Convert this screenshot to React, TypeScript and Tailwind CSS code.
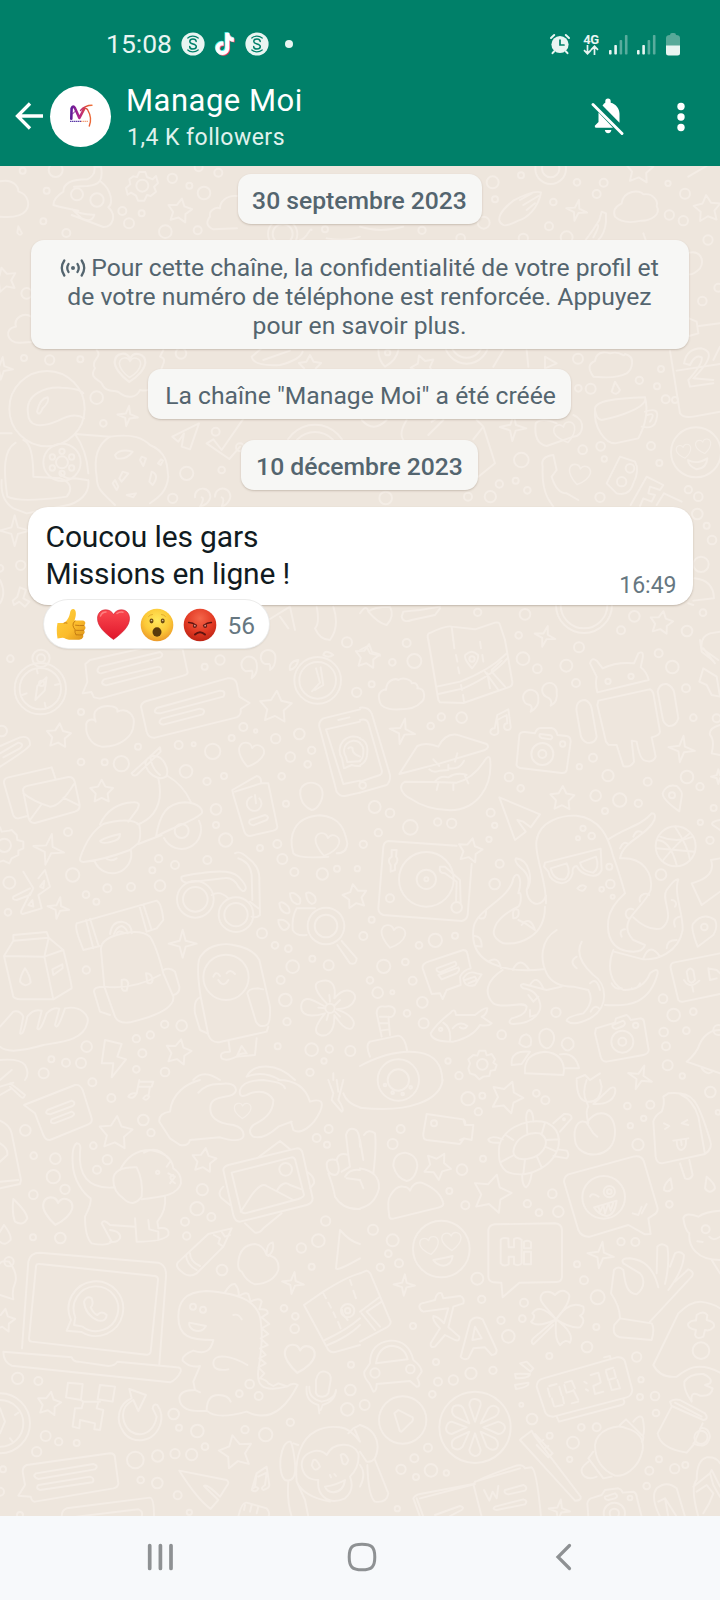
import React from "react";

type Dot = [number, number, number];
type Mark = [number, number, number, number];
interface Tile {
  x: number;
  y: number;
  dots: Dot[];
  stars: Mark[];
  sparkles: Mark[];
  hearts: Mark[];
  lines: string[];
}

const tiles: Tile[] = [
  {
    x: 0,
    y: 160,
    dots: [
      [167, 30, 21], [68, 32, 9], [517, 55, 14], [568, 77, 9], [612, 99, 19], [140, 92, 9], [130, 184, 9], [199, 219, 12],
      [367, 153, 12], [425, 160, 9], [387, 190, 15], [496, 215, 19], [593, 211, 12], [596, 22, 12], [655, 38, 12],
      [80, 400, 16], [72, 594, 9], [149, 600, 14], [241, 598, 9], [290, 713, 19], [310, 790, 10], [543, 580, 16],
      [647, 815, 12], [665, 930, 10], [560, 940, 20], [518, 1015, 14], [62, 1216, 14], [427, 77, 18], [848, 222, 44],
      [848, 222, 30], [975, 208, 9], [141, 746, 113], [186, 907, 56], [186, 907, 18], [186, 874, 8], [215, 891, 8],
      [215, 924, 8], [186, 940, 8], [157, 924, 8], [157, 891, 8], [231, 103, 18], [291, 120, 20], [945, 890, 96],
      [945, 890, 74], [720, 862, 12], [0, 1225, 10],
    ],
    stars: [[539, 153, 38, 10], [14, 360, 38, -15], [930, 620, 35, 0]],
    sparkles: [[383, 768, 31, 8], [5, 625, 34, 5], [44, 1112, 46, 0]],
    hearts: [[390, 622, 46, 0], [390, 622, 32, 0]],
    lines: [
      "M0 64C40 55 55 80 55 94C90 105 88 140 78 152C60 175 20 172 0 170",
      "M190 95Q160 115 160 135Q180 142 235 152M190 95C190 65 230 58 262 58Q288 45 283 20L303 20C310 60 300 75 262 78L222 80M303 65C335 90 340 130 325 142C350 165 340 200 310 201L215 165M217 148Q240 165 283 164Q275 190 245 175Z",
      "M418 36L436 36L441 51L458 58L468 48L474 70L462 80L468 95L452 108L441 105L433 122L414 122L408 107L393 98L383 104L378 84L391 73L388 58L400 49L411 51Z",
      "M711 205L640 208Q610 195 630 170C625 150 650 140 660 145C660 125 680 105 711 108",
      "M55 199L66 220Q60 230 52 218Z",
      "M94 470C70 455 40 475 48 500C10 505 20 550 60 548L94 546",
      "M290 570C310 590 270 600 285 625C265 655 300 660 305 670C320 705 350 685 360 700C380 715 410 715 420 690C460 700 455 665 480 655C475 620 510 600 480 590L490 570",
      "M84 760C75 700 140 680 185 683Q240 685 250 700M84 760C85 800 120 805 175 782Q225 755 252 775M111 755Q120 715 143 712Q150 725 128 745Q118 770 111 755Z",
      "M47 848C10 870 10 930 22 1010C60 1030 160 1015 200 1010C225 980 200 960 180 955L100 950Q100 850 70 840M180 935Q190 960 225 955L260 960M225 822Q260 870 265 940M265 960C270 1000 240 1030 190 1038L80 1060M225 822L330 830M0 820L35 820M5 960Q0 1020 40 1045L80 1060",
      "M330 830C400 820 430 835 450 855C510 880 500 930 505 950C500 1000 470 1015 450 1030M330 830C280 860 285 920 290 950C290 990 310 1000 345 1035",
      "M345 885Q360 865 398 875Q380 900 350 895ZM425 890L438 895L430 918L420 900ZM483 898L489 902L482 915L474 910ZM368 935L385 940L365 965L358 955ZM455 935Q480 945 458 975L448 965ZM345 960L355 980L350 990L338 970ZM380 1005L408 1000L400 1012Z",
      "M517 830L597 790L570 868L545 860L552 820L535 845Z",
      "M620 850L640 838L665 870L790 690M620 850L688 897L720 860M755 590L790 560M755 590Q760 620 840 615Q900 600 908 575M790 600L870 572",
      "M585 1012A23 23 0 1 1 628 1020Q620 1035 600 1040Q615 1015 605 1012M645 1010A23 23 0 1 1 688 1020Q680 1035 665 1040Q675 1015 665 1012",
      "M60 1282L78 1290L70 1315L88 1325L75 1340L58 1325L42 1335L38 1322L52 1310Z",
      "M0 1260Q20 1300 0 1330M805 1380L870 1340L885 1410M840 1370L865 1405M950 1340Q960 1390 945 1405Q960 1440 990 1440Q1020 1400 1000 1340",
      "M935 210C930 200 920 240 900 240M980 235Q1040 245 1080 230",
    ],
  },
  {
    x: 360,
    y: 160,
    dots: [
      [398, 67, 18], [483, 46, 9], [405, 118, 9], [651, 67, 10], [731, 68, 12], [710, 102, 12], [580, 126, 10], [567, 199, 12],
      [371, 188, 18], [186, 211, 11], [490, 235, 14], [620, 232, 18], [924, 70, 8], [975, 101, 15], [928, 165, 14],
      [970, 182, 14], [1044, 240, 14], [1075, 383, 12], [1027, 423, 13], [302, 235, 13], [654, 596, 15], [903, 627, 9],
      [838, 661, 11], [891, 679, 9], [692, 686, 15], [917, 718, 12], [722, 859, 13], [668, 869, 13], [873, 858, 12],
      [733, 897, 8], [898, 909, 9], [484, 900, 22], [467, 962, 9], [418, 972, 11], [502, 991, 10], [391, 1010, 17],
      [324, 1010, 12], [720, 1012, 14], [985, 989, 11], [1015, 1010, 13], [1012, 1062, 16], [1040, 1097, 9],
      [1056, 1140, 13], [1023, 1213, 23], [1029, 1358, 10], [823, 1369, 16], [353, 1357, 11], [495, 1363, 16],
      [476, 1426, 10], [783, 1411, 12], [981, 1413, 16], [1008, 877, 75], [810, 925, 13], [785, 965, 14], [77, 1014, 19],
      [572, 26, 46], [572, 26, 26], [672, 1335, 84], [672, 1335, 70], [320, 545, 66], [320, 545, 48], [83, 578, 8],
      [655, 685, 10], [945, 720, 9],
    ],
    stars: [[838, 30, 43, 5], [1042, 147, 42, -5], [190, 622, 38, -20], [904, 1389, 36, 10]],
    sparkles: [[650, 151, 32, 12], [459, 803, 40, 3], [555, 1429, 32, 15]],
    hearts: [[658, 944, 32, 10], [972, 874, 22, -12], [1031, 859, 23, -12], [616, 818, 32, -18]],
    lines: [
      "M430 195C400 180 430 145 460 122Q520 90 543 97C535 145 500 175 475 182Q440 200 430 195ZM480 120L515 100M490 135L535 108M500 150L525 130",
      "M985 50L1040 18",
      "M765 170Q755 145 785 130C790 90 840 88 850 103C880 98 895 125 890 138C905 165 870 182 845 182C810 190 780 185 765 170Z",
      "M677 240Q700 210 718 180L725 155L738 160L738 185Q735 220 715 240M700 232Q718 200 714 195M850 220L857 240",
      "M987 278C1020 270 1035 300 1020 325Q1000 345 987 343M987 475L1010 485L1015 520L987 528M1017 498L1080 490",
      "M700 650Q675 615 705 603C710 565 750 580 750 580C785 570 790 595 795 582C830 590 815 630 800 640C760 660 720 650 700 650Z",
      "M765 665L780 690Q770 710 755 695ZM555 590L590 610L555 625Z",
      "M930 572L960 760Q970 775 1000 770L1080 755M950 632L1080 612M972 610Q980 565 1025 565C1065 575 1045 610 1000 655L1060 660M972 610L990 615Q1005 582 1025 592Q1030 610 985 660L990 680L1060 670M1060 600L1080 560",
      "M705 750C700 720 780 715 855 712C865 740 780 770 725 780Q710 780 705 750C700 800 735 850 765 850L835 835Q870 770 855 712M855 755Q900 740 890 775Q885 810 845 800M862 765Q890 755 870 785",
      "M527 790Q520 850 560 858L640 830C670 830 680 780 640 765M527 790Q545 770 590 790",
      "M548 920Q540 890 580 885L590 930L575 950Q590 1000 620 1000L655 1020M548 920Q545 990 570 1025L580 1040",
      "M780 890L740 970L770 1000Q810 1010 820 970Q840 930 825 905ZM860 950L910 975L900 990L870 980L865 1000L885 1005L875 1025L850 1015L840 1038M860 950L812 1035M912 1000L965 1025M912 1000L890 1035",
      "M205 825L250 780M215 785L240 770M350 780L370 800L405 910L355 950M370 800L340 838M130 840Q115 820 140 780M55 570Q55 600 75 620Q110 600 115 570M400 620L430 570M500 570L505 620M5 780Q40 820 80 780",
      "M0 1360Q20 1330 25 1355Q40 1340 90 1340M25 1355Q55 1390 80 1395Q105 1370 90 1340M125 1370L130 1355L180 1350L240 1340M125 1370Q130 1390 155 1380L225 1365L240 1345",
      "M207 1420Q260 1395 275 1400L345 1408L405 1388Q418 1385 420 1395L435 1440M207 1420Q200 1425 205 1440M275 1400L280 1440",
      "M0 1470L20 1460L30 1480L60 1487",
      "M1003 1255Q1060 1260 1062 1315L1000 1322M985 1330L1000 1335M1080 1415L1050 1420Q1020 1430 1025 1465L1075 1500M1030 1465L1065 1510M0 200Q60 220 130 200",
      "M984 900Q1010 915 1042 895Q1040 925 1010 928Q985 918 984 900Z",
    ],
  },
  {
    x: 0,
    y: 640,
    dots: [
      [31, 56, 10], [660, 60, 14], [614, 80, 9], [243, 216, 9], [730, 261, 12], [767, 273, 5], [695, 294, 9], [827, 296, 14],
      [898, 282, 16], [935, 331, 11], [871, 351, 14], [923, 373, 10], [414, 320, 9], [536, 315, 12], [581, 313, 6],
      [638, 334, 23], [364, 371, 23], [243, 366, 10], [314, 367, 9], [558, 394, 19], [621, 424, 11], [672, 408, 9],
      [845, 409, 10], [858, 491, 9], [648, 508, 16], [648, 555, 9], [204, 576, 12], [677, 600, 20], [780, 624, 9],
      [832, 612, 12], [847, 657, 15], [883, 696, 12], [967, 702, 17], [1011, 686, 9], [1072, 686, 8], [476, 656, 11],
      [457, 691, 9], [525, 675, 12], [622, 660, 12], [218, 705, 20], [322, 745, 12], [393, 741, 12], [480, 737, 16],
      [258, 764, 10], [289, 785, 9], [28, 728, 18], [24, 817, 10], [786, 880, 15], [825, 916, 10], [865, 926, 10],
      [937, 956, 9], [986, 976, 15], [878, 980, 19], [842, 1020, 12], [259, 990, 11], [856, 1080, 19], [861, 1145, 11],
      [494, 1153, 11], [545, 1157, 16], [451, 1185, 11], [409, 1196, 11], [260, 1220, 16], [427, 1240, 12],
      [833, 1219, 9], [935, 1229, 19], [988, 1227, 11], [1051, 1233, 15], [972, 1263, 8], [154, 1258, 9],
      [198, 1268, 12], [243, 1269, 15], [131, 1300, 15], [409, 1288, 10], [495, 1296, 13], [930, 1297, 11],
      [1070, 157, 14], [1041, 7, 15], [5, 273, 16], [121, 146, 77], [121, 146, 62], [123, 55, 26], [123, 55, 12],
      [953, 121, 70], [953, 121, 55], [586, 778, 55], [586, 778, 37], [708, 824, 52], [708, 824, 35],
      [978, 858, 55], [978, 858, 34], [678, 1012, 68], [13, 616, 20], [990, 1105, 14], [125, 130, 8], [545, 573, 21],
    ],
    stars: [[176, 288, 38, 5], [827, 202, 50, 4], [305, 455, 36, 0], [1065, 770, 38, -10], [535, 1237, 40, 12]],
    sparkles: [[146, 628, 47, 12], [175, 804, 33, 10], [548, 911, 42, 0]],
    hearts: [[752, 345, 38, 12], [980, 614, 36, 10]],
    lines: [
      "M140 112L134 152L106 180L112 138ZM110 88L113 100M134 188L137 202M165 135L178 132M66 165L80 160",
      "M270 60L440 22L548 28L563 98Q562 104 550 107L300 176L282 172L274 156L248 160L262 126L256 72ZM298 80L480 36Q493 44 482 52L302 100Q285 96 298 80ZM312 118L475 80Q490 84 480 94L318 136Q298 132 312 118Z",
      "M440 183L682 115Q705 112 710 130L718 170L749 189L722 207Q725 225 710 232L465 293Q445 294 440 275L423 200Q424 188 440 183ZM470 204L660 152Q680 152 670 170L480 220Q455 220 470 204ZM485 236L600 206Q620 208 608 223L490 254Q470 250 485 236Z",
      "M259 260C255 235 285 235 287 245C270 205 310 198 322 198C345 198 355 205 352 215C385 200 405 230 401 252C400 290 360 322 305 320C270 315 257 280 259 260Z",
      "M738 94A23 23 0 1 1 770 70Q775 100 755 115Q760 95 755 92ZM795 72A22 22 0 1 1 826 48Q828 80 810 90Q812 75 808 72Z",
      "M948 85L960 128L936 154M962 82L970 135L945 150M970 45Q975 25 1000 45Q985 55 970 45M870 90Q865 65 895 60Q890 85 870 90",
      "M0 318L60 292Q90 285 90 315Q80 330 0 380M0 340L55 308Q75 312 60 325L10 352",
      "M166 415L155 382L25 412Q10 415 12 430L38 520Q42 537 55 535L82 528M85 437L205 411Q220 410 224 425L239 495Q240 510 225 515L105 549Q90 550 86 535L69 450Q70 440 85 437ZM70 460Q100 485 150 500Q180 500 222 432M90 540L123 495M190 473L237 496",
      "M0 562L5 575L28 572L35 570L50 585L52 600L70 605L70 625L55 632L55 645L35 655L28 670L10 662L0 665",
      "M395 400L455 345L480 322L482 335L410 405Q400 410 395 400ZM460 348C490 345 510 390 498 410C475 425 440 400 436 370Q440 350 460 348ZM452 355Q455 385 480 405M475 415Q490 480 460 520Q440 545 412 553M503 408Q550 435 572 485M468 590C480 520 500 490 555 487C600 490 610 510 605 520C580 545 520 560 468 590ZM597 542A55 55 0 1 1 492 594M300 553Q330 490 400 487Q425 485 412 508L385 545",
      "M240 655Q265 580 310 552C350 540 400 535 418 555Q425 590 415 610L390 630Q310 660 250 666Q238 665 240 655ZM415 612L485 585M285 666A57 57 0 0 0 393 632M315 653Q330 668 350 655M300 603Q320 590 360 582Q360 597 345 602Q305 615 300 603Z",
      "M697 450L770 408Q785 410 783 430L805 430L832 560Q832 568 820 572L750 588Q738 588 733 575L700 465ZM705 455L783 430M755 470A22 22 0 1 0 778 475M765 465L768 490M750 540L795 525Q810 530 800 540L760 556Q742 552 750 540Z",
      "M903 475C890 430 930 425 945 430C975 440 970 470 960 490Q948 510 935 510Q910 500 903 475ZM880 640C865 590 880 530 960 526C1020 530 1035 570 1042 610Q1040 640 1010 640M880 640Q895 657 985 650",
      "M1080 208L970 235Q955 245 958 260L1010 455Q1020 470 1035 468L1080 458M1080 245L978 268L1030 432L1080 422M1015 240L1048 232M1080 294A42 42 0 0 0 1026 355L1032 385L1055 375Q1065 379 1080 378M1080 308A30 30 0 0 0 1038 350L1042 366L1080 364M1045 325Q1050 318 1058 325Q1055 340 1080 350",
      "M705 640Q720 630 745 655Q780 680 778 720L780 825Q770 835 755 830M715 655Q750 665 755 705L757 780M735 750Q730 760 715 740Q700 710 670 715L560 728Q540 725 545 710Q560 705 600 700C660 690 700 695 715 710Q745 740 735 750ZM635 765Q660 750 685 775M775 805L750 785",
      "M70 695L100 745L90 765L50 780Q35 780 40 770L90 745M115 715L135 690L150 740L115 765L125 805L68 822Q60 820 65 810L90 760M120 740L133 722L130 745ZM85 795L97 780L100 800Z",
      "M230 850Q225 860 235 890L250 930L300 918M230 850L470 782Q485 790 490 840L470 865L440 875M258 840L280 925M270 836L295 915M418 797L440 875M430 793L455 870M330 882Q335 845 365 845Q395 850 395 880M342 882Q350 860 365 858Q380 865 383 880M350 880Q355 870 370 878",
      "M303 930Q300 900 350 885Q420 865 450 890Q470 920 490 1000L520 1070Q525 1115 390 1147Q355 1152 345 1130L313 1040ZM313 1040Q400 1050 480 1005M282 1055Q280 1040 313 1040M282 1055L300 1115L330 1125M490 990Q510 980 525 995L538 1040Q540 1060 520 1065M365 1020Q380 1015 385 1030L380 1052Q365 1055 365 1040ZM438 1000Q455 1000 458 1020Q455 1035 442 1028Z",
      "M40 885L140 876L146 893L40 902ZM40 902L12 948L40 1070Q45 1077 60 1078L160 1078L215 1045Q215 1030 190 930L146 893L133 950L160 1078M12 948L133 950L190 930M157 988L187 973L188 985L160 1005ZM75 985Q60 1010 60 1025Q75 1045 92 1028Q90 1005 75 985Z",
      "M838 790Q845 780 865 800Q875 820 860 820Q840 815 838 790ZM870 760Q885 755 900 775Q905 795 890 792Q870 785 870 760ZM918 760Q930 752 945 770Q952 790 935 792Q920 785 918 760ZM835 840Q855 835 868 855Q865 870 850 870Q835 860 835 840ZM945 805L890 805Q875 830 878 870Q890 890 920 885M1025 903L1070 955Q1070 975 1050 970L1012 915",
      "M602 1070Q585 960 605 945C630 910 680 910 700 915Q760 925 778 960L810 1100Q812 1150 800 1155Q780 1165 768 1145L742 1060Q745 1045 775 1045L790 1048M602 1070L625 1185Q635 1210 660 1206L800 1175L805 1160M600 1072Q580 1080 585 1120L600 1170L622 1180M640 1010Q648 990 660 1008M680 1000Q690 985 705 1002M655 1020Q670 1045 685 1020M686 1205L690 1235Q655 1235 665 1255Q680 1265 710 1250L725 1218L740 1240Q715 1240 712 1250L765 1245L770 1195",
      "M980 1090C950 1060 935 1030 960 1024C990 1015 1010 1030 1003 1075C1040 1030 1075 1060 1063 1080Q1055 1105 1010 1108C1060 1125 1070 1150 1055 1165Q1035 1175 1003 1125C1005 1185 975 1190 960 1185Q930 1175 975 1120C905 1140 900 1110 905 1090C915 1065 940 1080 972 1098M990 1085L988 1065M1005 1095L1020 1080M1005 1115L1020 1130M985 1122L980 1140M975 1105L955 1103",
      "M0 1160L40 1115Q60 1110 70 1130L60 1180Q70 1190 82 1130Q100 1105 125 1112L112 1165Q120 1180 140 1120Q160 1100 178 1106L165 1155Q172 1175 195 1105C240 1095 270 1125 262 1150C250 1200 190 1205 130 1215Q80 1230 40 1232Q10 1230 0 1220",
      "M315 1200L365 1212L352 1250L378 1258L335 1312L340 1270L305 1270ZM0 1260Q60 1255 75 1275Q90 1300 75 1320M0 1320L35 1290M580 1320Q610 1285 660 1320M740 1310C760 1270 830 1265 885 1320M740 1310Q790 1290 840 1320M1000 1320L1000 1300",
    ],
  },
  {
    x: 360,
    y: 640,
    dots: [
      [140, 9, 12], [163, 63, 21], [97, 67, 10], [35, 133, 9], [489, 56, 19], [532, 86, 13], [619, 77, 18], [657, 22, 15],
      [648, 129, 12], [896, 40, 12], [937, 81, 19], [978, 145, 12], [244, 231, 11], [305, 233, 16], [212, 258, 10],
      [699, 353, 12], [658, 380, 8], [447, 411, 13], [482, 445, 10], [744, 407, 17], [863, 425, 12], [981, 411, 19],
      [1020, 440, 11], [1000, 233, 10], [1070, 235, 12], [707, 467, 16], [779, 480, 20], [835, 490, 11], [735, 513, 9],
      [44, 501, 18], [90, 519, 13], [392, 518, 12], [404, 556, 8], [387, 598, 8], [151, 562, 22], [55, 578, 11],
      [10, 613, 11], [233, 546, 11], [275, 550, 14], [669, 565, 8], [654, 595, 6], [695, 588, 10], [1021, 547, 8],
      [1061, 504, 9], [1050, 601, 11], [748, 680, 9], [751, 732, 13], [758, 770, 6], [725, 748, 7], [903, 704, 16],
      [419, 671, 12], [404, 732, 16], [90, 775, 12], [35, 839, 9], [226, 901, 20], [285, 887, 9], [177, 916, 10],
      [71, 979, 20], [136, 966, 10], [30, 1021, 10], [158, 1022, 12], [53, 1058, 16], [97, 1057, 6], [187, 1087, 16],
      [141, 1120, 10], [191, 1150, 15], [425, 1184, 13], [588, 1117, 14], [909, 1076, 13], [941, 1125, 19],
      [1000, 1115, 10], [911, 1176, 13], [979, 1172, 10], [918, 1219, 12], [923, 1276, 15], [967, 1308, 8],
      [264, 1263, 8], [297, 1307, 11], [1075, 1170, 15], [10, 888, 12], [744, 124, 8], [813, 109, 8], [547, 342, 33],
      [547, 342, 12], [608, 312, 8], [936, 466, 9], [947, 619, 60], [199, 718, 82], [199, 718, 29], [199, 718, 6],
      [1033, 861, 10], [787, 1205, 33], [787, 1205, 12], [827, 1156, 8], [367, 1273, 16], [336, 57, 8], [8, 436, 10],
      [290, 802, 16], [242, 1168, 5],
    ],
    stars: [[22, 50, 38, 8], [607, 476, 38, 2], [330, 632, 38, 12]],
    sparkles: [[127, 274, 39, 12], [965, 327, 40, 8], [1075, 410, 22, 0]],
    hearts: [[98, 890, 36, 10]],
    lines: [
      "M205 0L235 180L240 187L310 189L450 140Q460 135 456 120L435 0M230 140L300 125Q390 90 440 40M235 162L310 145Q400 105 442 55M375 95L415 150M395 95L435 140M395 90L425 62M280 0L283 25M288 45L292 65M294 82L298 100M303 135L306 150M309 165L312 185M360 5L363 25M367 45L370 65M382 100L390 145M336 85Q310 55 316 45Q335 25 354 45Q358 60 336 85Z",
      "M0 203Q25 200 35 220L90 405Q92 425 80 435L0 458M0 240Q20 235 25 250L65 390Q68 400 60 405L0 425M0 296Q25 305 22 335Q22 365 0 376M0 310Q12 320 10 335Q10 355 0 362",
      "M58 180C50 155 75 145 78 150C80 115 110 115 115 120C130 110 155 120 155 130C170 125 175 140 172 145C200 145 195 180 182 188Q165 208 120 208C80 210 60 200 58 180Z",
      "M500 192A23 23 0 1 1 535 175Q538 200 512 215Q522 195 500 192ZM558 170A22 22 0 1 1 590 155Q595 185 572 197Q580 178 558 170Z",
      "M404 265L412 225L445 208L452 260M404 265A12 10 0 1 0 415 275L412 240L440 225L442 250A10 10 0 1 0 452 262",
      "M710 110L690 70Q695 50 710 62L728 85Q770 65 822 70L835 40Q852 30 848 55L842 82Q860 95 866 120L712 157Q705 130 710 110ZM715 182L868 148Q875 148 880 160L900 275Q900 285 875 292L887 350Q880 370 855 362Q840 360 830 305L815 302L822 365Q810 385 790 378L770 315L745 314L738 305L712 195ZM650 215Q645 182 675 180Q690 185 695 205L710 290Q705 312 680 308Q665 300 662 285ZM893 155Q898 130 920 132Q940 140 943 160L955 235Q948 260 925 258Q910 250 908 235Z",
      "M118 402L172 318Q200 305 235 320Q255 280 290 284L380 312Q390 322 375 330L240 370ZM135 425C110 440 130 465 150 475Q200 510 270 511C350 510 400 440 390 355Q385 345 375 360C350 400 320 420 290 428Q200 425 135 425ZM208 388Q220 400 240 392L265 390L265 375M265 385Q300 390 312 362M220 358L238 378M292 340L285 365M225 425Q240 405 265 412Q290 395 320 405M235 430L230 450M280 430L280 450M315 408L325 430",
      "M478 285Q480 275 495 276L525 280Q530 262 545 264L575 264Q590 268 592 285L620 288Q632 290 632 305L620 390Q618 400 605 399L480 384Q467 380 470 370ZM540 282L572 286Q582 292 572 298L545 294Q535 290 540 282Z",
      "M418 472L540 523L512 562L490 545L472 540L497 575L465 600Z",
      "M558 790C560 720 520 640 530 600C540 540 610 525 650 527C720 535 745 590 760 650Q775 690 795 760M745 598C800 560 840 560 875 520Q890 520 883 540C860 590 790 600 780 655M780 655C850 650 880 700 872 750C860 780 835 800 810 835Q790 870 820 900L855 915Q850 935 820 935C750 935 740 880 745 840Q750 800 795 760M820 832Q865 875 905 865C950 830 900 780 920 750Q945 715 955 718C940 760 970 820 968 870C955 940 890 960 850 958L762 935M840 785A18 18 0 0 1 868 765M805 835A15 15 0 0 1 820 808M935 780A12 12 0 0 1 945 800M945 860Q935 835 960 830M920 925Q920 900 950 900M850 955Q870 905 900 950M785 890Q775 870 795 868M780 625Q790 600 805 612M820 590Q830 565 848 578",
      "M558 768C540 810 500 790 500 750Q515 715 490 690Q460 665 468 655C510 660 520 720 500 750M475 760C490 710 470 690 460 715C450 780 340 810 340 870C330 970 430 1000 550 988M555 800C555 890 480 915 430 910C390 890 400 870 410 850Q430 820 475 800C485 790 485 750 475 760M360 835Q380 840 378 810M340 888Q365 885 365 920L348 918M385 965Q415 945 423 985M458 990Q480 945 508 990M460 835Q455 800 475 810Q480 835 460 835ZM475 840Q500 850 525 870M485 855Q510 825 525 870",
      "M590 870C540 900 540 960 560 1000Q580 1040 640 1040L685 1050Q705 1085 670 1120Q620 1130 620 1142Q640 1160 690 1135C750 1100 740 1030 700 1005Q640 950 665 905M428 990C380 1020 370 1060 400 1090C430 1110 490 1080 500 1100Q500 1125 455 1135Q440 1150 460 1152C530 1150 545 1110 540 1090Q530 1050 490 1045Q475 1035 490 1032L560 1050L605 1040M760 930C740 980 750 1030 790 1050Q850 1050 870 1000Q895 980 893 1000C870 1090 810 1100 735 1095M510 1035Q530 1000 550 1045M505 1065L520 1085L535 1070M690 1030Q710 1010 720 1050M650 950Q625 965 650 985M510 1110L510 1130L530 1125M692 1115Q705 1090 720 1108M755 1030Q765 1050 785 1045M815 1045Q830 1050 840 1030",
      "M552 680L555 668L722 626L725 690Q715 712 690 706Q660 700 650 678Q635 680 638 700Q630 728 605 730Q570 725 565 695ZM572 685L620 670Q635 700 615 718Q580 722 572 685ZM660 668L708 650Q720 685 700 698Q665 695 660 668ZM652 745Q665 730 678 740Q670 762 652 745Z",
      "M945 560Q985 620 990 660M890 600Q930 600 950 675M900 590Q950 610 1000 590M910 660Q955 605 990 580M888 625L1005 635",
      "M958 514Q908 480 908 460Q920 430 950 438Q970 455 965 470ZM1013 920Q990 860 1000 850Q1030 815 1065 840Q1075 860 1060 885Z",
      "M290 617L85 603Q72 605 70 620L55 805Q55 820 70 825L305 843Q320 840 323 825L335 672M95 630L110 630L108 650Q118 660 105 675L105 690L92 695L92 675Q80 660 95 650ZM240 680L255 680L300 720L302 790M240 680Q235 700 255 700L290 725L288 787",
      "M205 965L310 930Q320 930 322 940L332 985Q310 990 300 1010L302 1035L260 1050L248 1077L240 1060L215 1062L188 985Q185 972 205 965ZM230 985L285 965Q295 975 280 980L240 997Q228 995 230 985ZM235 1005L295 982Q302 990 290 1000L245 1018ZM310 1015Q325 990 350 1000L365 1003L345 1035Q315 1045 310 1015ZM315 1020L345 1010L350 1020L325 1030",
      "M1080 940L940 968Q930 972 932 985L955 1080Q960 1087 970 1085L1080 1062M980 995Q990 978 1000 992L1005 1020Q995 1035 985 1022ZM972 1020Q990 1050 1018 1022M997 1040L1000 1055M1045 985L1070 990L1080 1000M1045 985L1050 1020L1070 1015",
      "M212 1180Q230 1150 270 1120Q285 1100 288 1125L345 1125Q375 1100 382 1105Q380 1125 365 1130L395 1150Q385 1160 360 1155Q340 1190 280 1205C240 1205 215 1200 212 1180ZM250 1148Q275 1165 270 1203M278 1165Q300 1140 322 1158Q315 1170 300 1162",
      "M478 1210Q480 1185 500 1183Q518 1190 512 1215Q498 1230 478 1210ZM538 1195Q535 1170 560 1166Q585 1172 582 1200Q575 1225 560 1225Q540 1220 538 1195ZM605 1215Q605 1195 625 1193Q645 1200 640 1220Q620 1245 605 1215ZM495 1300Q490 1240 555 1235Q610 1240 612 1290L610 1305ZM455 1275Q450 1230 510 1235L485 1272ZM600 1243Q645 1235 657 1285L615 1285",
      "M708 1165L765 1148L768 1135L800 1125Q808 1130 812 1140L840 1135Q850 1135 852 1145L866 1230Q865 1242 850 1245L740 1265Q725 1265 722 1250L705 1180ZM758 1155L790 1142Q800 1150 790 1158L768 1167Q755 1165 758 1155Z",
      "M358 1232L376 1232L380 1246L395 1242L405 1258L400 1268L410 1275L405 1290L392 1292L388 1308L370 1310L358 1318L345 1305L330 1300L325 1285L330 1270L325 1258L340 1245L352 1247Z",
      "M65 1190L50 1120Q50 1095 75 1100Q105 1095 105 1115Q100 1135 85 1130L90 1185M60 1130L80 1130M60 1150L82 1150M62 1172L86 1168M30 1250Q15 1215 30 1205L115 1187Q135 1190 142 1235M0 1278Q100 1225 180 1238Q245 1250 247 1320",
      "M1030 85L1070 110L1080 170L1055 165L1040 135L1018 125ZM1080 255Q1045 265 1050 285Q1065 300 1055 340L1080 345M1080 655L1053 660Q1070 710 995 730L1025 795L1080 755M980 1265Q1010 1240 1020 1210Q1040 1170 1080 1170M980 1265L1080 1300M1025 1285Q1045 1310 1060 1292M1080 540Q1050 545 1058 555L1080 570M1020 0L1025 35L1060 62",
      "M650 1315L675 1305L690 1320L720 1300",
    ],
  },
  {
    x: 0,
    y: 1080,
    dots: [
      [334, 54, 12], [277, 7, 12], [430, 120, 16], [453, 158, 11], [76, 151, 16], [101, 227, 10], [166, 236, 16], [160, 290, 20],
      [195, 328, 14], [280, 197, 10], [322, 239, 14], [291, 269, 12], [100, 344, 13], [99, 472, 9], [181, 474, 16],
      [607, 329, 17], [591, 386, 20], [634, 411, 12], [555, 425, 12], [560, 468, 11], [666, 570, 16], [950, 174, 12],
      [986, 147, 12], [981, 194, 9], [977, 423, 14], [955, 482, 19], [904, 504, 14], [935, 560, 9], [852, 685, 10],
      [886, 709, 10], [884, 746, 13], [1053, 854, 9], [1051, 930, 16], [1042, 988, 19], [871, 1027, 11], [53, 895, 17],
      [115, 903, 12], [521, 1002, 16], [537, 1043, 9], [592, 1053, 19], [735, 1049, 11], [797, 1064, 20], [749, 912, 13],
      [718, 941, 10], [776, 948, 12], [137, 1068, 15], [176, 1085, 11], [230, 1089, 9], [110, 1115, 14], [406, 1140, 25],
      [473, 1128, 17], [525, 1121, 14], [575, 1124, 17], [615, 1100, 10], [422, 1200, 10], [472, 1209, 16],
      [533, 1246, 12], [9, 1168, 9], [568, 1297, 8], [857, 268, 19], [579, 680, 9], [609, 689, 9], [473, 277, 5],
      [1043, 692, 20], [1043, 692, 8], [0, 1030, 90], [0, 1030, 70], [27, 545, 14],
      [0, 1235, 12], [60, 1305, 9],
    ],
    stars: [[347, 160, 52, 5], [612, 242, 38, 8], [10, 722, 36, 10], [147, 972, 37, 10], [708, 1117, 52, -12]],
    sparkles: [[879, 609, 33, 8]],
    hearts: [[172, 393, 44, 5], [728, 92, 25, 0], [898, 836, 45, 5]],
    lines: [
      "M72 75L225 15Q240 12 248 30L275 115Q278 128 265 133L150 180Q138 182 130 165L105 100ZM142 90L215 62Q230 68 218 78L150 103Q132 102 142 90ZM155 118L215 95Q230 102 215 110L162 130Q148 130 155 118Z",
      "M0 20L40 8M30 10L50 25L75 45Q70 60 60 48L30 20M0 45L35 25",
      "M385 50Q390 38 410 40L418 0M385 50Q400 60 410 40M415 20L450 20L445 50M430 55Q440 40 448 50Q440 65 430 55M420 5L460 5L455 20",
      "M595 38Q620 10 660 12Q705 5 708 30C705 60 640 40 632 75C625 110 650 130 700 135Q735 145 730 170Q720 190 660 172L570 180Q565 200 540 195L510 175L478 125Q475 100 510 95C515 40 560 10 600 0M720 30Q730 0 790 0L820 5Q850 10 855 25M720 30Q715 60 750 40Q800 25 820 60C820 100 790 120 760 135Q740 155 760 170Q790 180 835 140L875 125M835 0Q910 0 930 65Q980 50 960 95C940 140 900 165 880 150L873 125",
      "M0 122Q30 135 35 160L63 300L60 312L0 325M0 305L55 300M0 190Q25 205 22 225L0 245",
      "M230 190Q215 200 218 250C220 300 250 340 272 355Q275 370 255 410Q255 470 275 490Q320 500 335 485L305 430Q310 415 330 435L405 440M230 190Q245 190 240 215C235 280 260 330 345 322M340 300Q340 260 410 262Q430 300 425 350Q400 385 370 355Q340 335 340 300ZM360 270Q390 210 450 210Q515 220 520 265Q545 280 543 310C530 355 460 350 425 358M432 218Q470 195 505 235M495 350Q500 390 472 425L475 445Q510 440 505 465Q490 485 410 485L405 415M445 420L448 448L475 455L475 480M330 450Q365 455 360 475Q350 490 330 485M505 280L525 290L510 310M510 245L500 260M520 285Q500 290 525 310",
      "M670 270Q670 260 685 255L890 205Q905 205 908 220L938 355Q938 370 920 375L720 425Q705 425 700 405ZM695 278L875 232Q885 232 887 245L912 345Q910 352 895 357L735 400Q725 400 722 390ZM722 395L755 345Q785 305 800 318L880 360M832 330Q850 300 870 315L905 328M775 232L840 183L870 208M920 275Q945 290 942 310L930 325M670 320Q650 340 665 355L690 375M735 430L765 458Q780 460 790 445L845 400",
      "M980 250Q985 235 1010 240Q1015 215 1045 225L1038 165Q1045 140 1065 148Q1080 155 1080 200M980 250Q980 285 1005 285Q1025 280 1010 240M985 280Q1000 320 1005 350Q1030 390 1080 387M1045 225L1050 260L1025 275M1035 290Q1050 265 1080 270M1040 295L1080 300",
      "M40 357Q80 395 82 415Q70 440 45 425Q35 400 40 357ZM12 435Q35 465 32 480Q15 500 0 485M12 435L0 455",
      "M695 445L670 500L590 580Q565 595 545 575Q525 560 533 548L625 462L695 445ZM665 455L675 470L690 465M642 465L660 475L655 490L670 500M558 525Q560 555 590 570M570 520Q570 545 600 558",
      "M715 545Q720 495 765 492Q790 495 800 525Q840 530 835 570Q820 610 765 613Q740 605 725 575Q712 570 715 545ZM800 520Q800 490 818 487Q825 510 805 528",
      "M1080 492Q1050 485 1020 450L1008 565Q1010 575 1080 535",
      "M66 805L85 545Q90 518 120 518L475 548Q500 555 498 590L478 852M108 560Q108 550 120 552L465 588Q475 590 474 600L452 815Q450 825 440 824L95 785Q86 783 87 775ZM10 815L215 832Q220 845 235 845L325 858Q345 858 352 845L530 862Q545 862 542 875Q530 900 510 907L35 857Q10 845 10 815ZM213 720A82 82 0 1 1 245 756L200 752ZM226 712A67 67 0 1 1 248 740L222 735ZM252 665Q260 645 275 655Q282 675 272 682Q280 700 292 705Q305 690 320 705Q320 725 295 722Q255 705 252 665Z",
      "M0 550Q5 540 27 545Q55 580 45 610Q35 630 40 658L0 645",
      "M640 780Q630 830 580 812Q545 825 548 842Q570 865 600 858L580 905L585 930Q540 930 538 955Q540 1000 620 992Q650 1020 740 995C800 1025 850 1000 893 915Q880 905 860 920C780 940 770 910 775 870Q790 780 783 730C780 670 730 640 620 633C550 635 535 670 535 710C535 770 570 780 640 780ZM568 728L618 738Q605 760 580 750Q565 740 568 728ZM700 705Q715 700 725 718M742 855C700 830 640 815 640 850Q640 875 685 868M600 937L585 930M620 992Q620 945 655 945Q685 945 692 965M675 637Q690 610 705 612Q720 630 715 650Q735 635 745 642L752 665Q780 650 785 665L778 688Q805 685 803 700L785 712L808 732L785 745L805 762L782 775L803 795L780 805L797 825L778 835L797 850L775 862L793 880L780 895Q800 900 805 910L820 918L835 910L858 918",
      "M912 675L970 635Q1040 590 1080 580M912 675L985 810Q995 820 1010 815L1080 795M975 780Q1040 750 1080 715M983 795Q1045 770 1080 735M970 640L978 655M985 668L993 683M1000 697L1007 712M1014 726L1022 745M1050 600L1055 615M1060 632L1068 655M1043 720Q1025 700 1027 690",
      "M948 900Q955 870 975 875Q995 880 992 900L985 940Q975 955 955 948Q945 940 948 930ZM928 920Q925 955 965 965Q1000 960 1008 935M920 920Q915 965 955 975L958 1000M1008 930Q1005 965 968 975L962 990",
      "M204 908L248 912L243 960L198 952ZM300 915L345 920L338 965L293 958ZM243 960L250 965L300 965M250 965L245 985L225 985L218 1040L238 1045L240 1020L285 1030L283 1048L300 1050L310 990L290 985L295 965",
      "M388 927L438 945L415 993L400 960Q360 980 372 1025C390 1080 460 1075 470 1010L458 985Q460 970 472 975Q490 1000 482 1030C465 1090 395 1095 370 1055C345 1020 355 970 395 955Z",
      "M0 985L15 1025L0 1060M45 1005L55 998M30 1075L38 1085",
      "M80 1155L330 1120Q345 1120 345 1135L355 1210Q355 1222 340 1225L105 1265Q95 1265 92 1250L55 1247L75 1215L68 1175Q68 1160 80 1155ZM108 1180L280 1152Q298 1158 285 1168L115 1197Q95 1190 108 1180ZM115 1215L270 1190Q285 1195 278 1207L120 1230Q105 1225 115 1215Z",
      "M185 1310Q185 1290 200 1285L450 1253Q462 1255 462 1310M230 1310L415 1288Q430 1292 425 1310",
      "M538 1172L680 1200Q690 1208 680 1218L660 1250Q620 1210 612 1218L655 1260L632 1287Q590 1255 538 1172ZM755 1230L770 1180L800 1160L808 1215M755 1230Q765 1215 775 1225Q768 1240 755 1230M770 1180L765 1220M775 1190L800 1178L795 1215Q780 1225 790 1230Q808 1225 808 1215M715 1310Q725 1265 740 1268L800 1285Q812 1300 805 1310M735 1275L732 1290M755 1275L750 1295M775 1280L770 1300",
      "M900 1110C920 1055 970 1035 1020 1042Q1050 1045 1080 1085M905 1155Q905 1120 950 1112Q970 1112 980 1125C1000 1085 1060 1085 1075 1120Q1080 1160 1050 1190Q1065 1230 1035 1255C980 1280 950 1240 955 1200Q910 1200 905 1155ZM890 1205Q910 1250 990 1265M900 1110Q885 1150 890 1205M872 1085C840 1080 830 1180 855 1200Q890 1210 885 1150Q880 1100 872 1085ZM895 1095L880 1090M865 1205Q860 1260 875 1310M890 1205L915 1260L925 1310M940 1140Q950 1135 960 1160Q945 1180 935 1155ZM1022 1125Q1035 1115 1045 1140Q1040 1160 1028 1150ZM975 1220Q1010 1215 1035 1200Q1030 1235 1000 1237Q980 1235 975 1220ZM990 1185L993 1192M1003 1182L1008 1188M1045 1060L1060 1045L1080 1035M1065 1050L1080 1085",
      "M985 0L1000 40L995 60L1025 95Q1035 90 1015 60L1030 0M1010 0L1015 35M1030 40Q1040 70 1080 82",
    ],
  },
  {
    x: 360,
    y: 1080,
    dots: [
      [324, 56, 20], [367, 47, 9], [355, 95, 11], [122, 147, 12], [98, 192, 15], [529, 40, 10], [556, 61, 12], [369, 236, 9],
      [306, 269, 16], [268, 333, 9], [316, 376, 12], [39, 449, 15], [98, 481, 18], [85, 521, 10], [61, 562, 11],
      [117, 550, 12], [577, 341, 13], [502, 371, 11], [537, 398, 10], [595, 395, 16], [783, 485, 11], [826, 486, 12],
      [651, 553, 9], [672, 601, 12], [713, 652, 21], [802, 78, 10], [871, 74, 12], [851, 115, 8], [811, 137, 8],
      [834, 194, 17], [1051, 36, 16], [1074, 97, 7], [928, 373, 10], [352, 596, 18], [365, 658, 11], [492, 668, 12],
      [487, 716, 10], [423, 721, 11], [445, 769, 19], [159, 738, 9], [228, 846, 9], [333, 880, 17], [399, 871, 11],
      [280, 900, 14], [234, 905, 12], [217, 943, 10], [14, 975, 15], [681, 801, 16], [709, 741, 9], [568, 828, 9],
      [484, 974, 6], [516, 1017, 16], [569, 1067, 9], [664, 1042, 10], [710, 1042, 12], [639, 1088, 18],
      [629, 1138, 8], [830, 831, 14], [843, 899, 8], [840, 951, 9], [885, 948, 13], [888, 999, 10], [204, 1103, 12],
      [163, 1135, 12], [123, 1168, 14], [213, 1171, 19], [259, 1179, 8], [168, 1191, 9], [112, 1286, 8],
      [897, 1138, 9], [868, 1172, 12], [944, 1166, 14], [976, 1155, 9], [860, 1218, 10], [115, 0, 62], [115, 0, 32],
      [222, 130, 9], [731, 352, 64], [748, 335, 17], [748, 335, 7], [244, 507, 85], [1037, 448, 12], [1023, 812, 25],
      [45, 879, 14], [151, 867, 13], [128, 1020, 71], [345, 1042, 107], [1023, 1072, 20], [763, 1300, 32],
      [763, 1300, 14], [810, 1254, 7], [75, 15, 4], [98, 38, 4], [128, 42, 4], [152, 22, 4], [612, 118, 3],
    ],
    stars: [[440, 52, 50, 20], [395, 342, 60, 15], [232, 258, 42, 30]],
    sparkles: [[722, 525, 40, 8], [133, 615, 32, 3], [598, 1290, 32, 8], [840, -8, 38, 20]],
    hearts: [[209, 497, 28, -12], [275, 484, 29, -5]],
    lines: [
      "M248 0C240 60 150 100 0 83",
      "M200 102L310 118Q318 125 315 135L340 135L335 180L312 175L300 192L200 180Q188 178 190 160ZM310 118L315 135M312 175L300 180",
      "M100 258Q100 220 135 218Q172 225 172 260Q165 300 140 303Q110 295 100 258ZM88 410Q80 360 92 345Q110 315 130 320Q145 320 150 332Q160 305 185 308Q240 330 250 370Q250 380 235 383L100 416Q90 418 88 410ZM0 180L10 240M12 165Q25 145 45 160Q50 200 40 280M0 265Q60 275 57 325Q45 375 0 385M0 300L10 325",
      "M417 220C410 150 500 110 560 128Q605 150 595 200C580 260 500 300 440 275Q415 255 417 220ZM460 215C465 170 510 155 540 160Q565 175 555 200Q540 235 490 238Q460 235 460 215ZM500 130Q495 95 508 90Q520 95 520 125M580 130L612 102Q635 100 635 115L600 155M416 188Q385 190 385 178Q395 165 428 178M595 208L620 212Q630 225 620 235L580 228M487 283Q485 315 498 322Q510 315 515 280M500 130L502 160M555 128L545 162M460 180L437 165M462 225L425 245M495 238L490 282M530 228L545 262M555 200L590 215M558 180L598 178",
      "M650 0Q650 60 680 65Q720 70 725 20L720 0M700 72L750 25Q770 15 765 40Q755 75 700 72M680 0Q665 40 680 65L685 80Q675 90 685 130M685 130C650 110 640 150 645 180C650 240 770 245 765 150C760 90 710 85 680 128L700 160L712 170",
      "M612 305Q612 290 625 283L820 230Q845 225 852 245L893 385Q893 400 880 405L865 415L872 462L855 463L805 435L690 470Q665 472 655 450ZM690 350Q695 335 716 350M702 382L770 362Q765 405 740 408Q715 405 702 382ZM715 380L720 395L730 375L735 400L745 370L752 392L760 368M818 400L835 405L845 380M845 400L860 372",
      "M880 125Q885 105 905 95Q915 70 910 50L925 40Q980 35 1000 60Q1020 80 1050 180Q1060 205 1035 222L905 250Q890 250 887 230ZM960 42Q1000 60 1015 110L1035 222M960 250L975 295Q990 302 998 285L988 240M912 130L928 138L915 147M982 120L965 130L985 135M940 182L985 175M950 182Q950 210 965 210Q980 205 978 178M963 180L965 195M932 295Q910 315 912 330Q925 340 937 325ZM1040 290Q1065 310 1065 325Q1050 345 1035 325Z",
      "M1080 392Q1035 395 1015 410Q975 395 970 415Q975 450 988 460C985 500 1010 540 1080 540M1048 470Q1060 485 1080 470M1055 540L1080 580M1012 484L1028 486",
      "M405 433L585 430Q605 432 606 450L606 590Q605 606 590 606L478 608L428 652L424 608L400 607Q385 603 385 590L385 450Q387 435 405 433ZM422 480Q425 472 445 475L446 502L462 502L462 477Q475 470 485 480L485 550Q475 560 462 552L462 530L446 530L446 553Q430 562 422 550ZM492 485Q505 478 513 487L513 505L492 505ZM492 515L513 515L513 553L492 553Z",
      "M220 540Q250 535 278 528Q275 555 250 557Q230 555 220 540Z",
      "M780 715Q780 680 753 640L762 570Q775 555 790 570C795 610 800 640 830 643C860 620 850 590 840 580L790 550Q780 535 810 535C850 540 880 560 895 622M890 580L892 500Q905 485 922 500Q930 550 915 612M930 560L945 520Q960 510 972 525Q970 570 925 630M945 605L985 568Q1005 575 995 590L870 725M780 715L875 730Q885 745 875 780L780 772Q755 765 763 735Z",
      "M0 580L20 572Q30 575 35 590L92 725Q92 735 80 742L0 785M0 695L60 650M5 700L45 750M20 695L60 740M20 695L65 665",
      "M178 680Q178 670 195 668L225 660Q230 635 245 640L250 655L300 648Q315 655 310 670L280 680L265 742L298 770Q300 785 285 780L255 765L225 800Q210 805 212 790L240 745Q215 720 220 708Q235 710 252 730L265 685L190 695Q180 692 178 680ZM302 830L330 725Q345 705 368 718L410 810Q410 825 395 825L375 802L340 805L325 835Q310 842 302 830ZM345 740L365 775L337 780Z",
      "M588 718C560 680 525 660 550 638Q570 630 585 645Q610 620 628 645Q630 670 588 718ZM588 718C550 680 530 680 517 700Q530 710 513 725Q530 745 588 718ZM588 718C620 670 650 670 670 680Q675 700 660 707Q680 720 660 742Q630 745 588 718ZM588 718C585 770 590 785 600 795Q615 775 630 788Q645 760 588 718ZM588 718L520 775Q510 785 520 793L580 735",
      "M48 850Q55 800 95 797Q135 800 143 838ZM30 850Q30 790 90 782Q145 780 160 840Q185 860 185 875L172 895Q185 920 170 920L150 903L50 912Q50 935 40 935L28 910Q10 890 13 875ZM480 850L500 845L520 865L512 875ZM465 882Q475 880 510 882Q508 895 468 895ZM465 915L505 908Q510 920 468 927Z",
      "M550 895L770 832Q790 830 795 845L817 930Q815 948 800 952L580 1010Q560 1010 555 995L530 920Q530 900 550 895ZM590 1010L597 1025L785 975Q798 970 790 958M732 832L750 828L752 838M568 918L590 912M563 925L570 950M575 955L582 978M598 920L605 945M608 950L612 970M585 980L608 975M615 908L635 902L645 925M640 930L655 960M655 965L635 970M613 915L620 938L640 932M673 905L680 910M678 928L684 932M692 885L715 878L722 905M722 908L700 918L705 942L730 935M738 870L760 863M738 875L745 900L768 893L762 870M748 905L755 930L780 925L772 900",
      "M103 1000L115 990L158 1012Q162 1022 150 1030L125 1055Q118 1055 117 1045Z",
      "M345 1025L328 975Q330 955 345 957Q365 960 362 975ZM362 1030L385 985Q400 970 415 985Q420 1000 405 1010ZM370 1042L415 1025Q435 1030 435 1045Q430 1062 415 1062ZM362 1055L405 1075Q420 1090 410 1105Q395 1115 380 1100ZM345 1060L362 1110Q360 1128 345 1128Q330 1125 328 1110ZM328 1055L308 1100Q295 1115 278 1103Q270 1085 285 1075ZM320 1042L275 1062Q258 1060 258 1045Q262 1025 275 1025ZM328 1030L285 1010Q270 995 280 980Q300 970 310 985Z",
      "M485 1075L515 1052L525 1070L662 1250Q665 1262 645 1262L480 1080ZM525 1062L578 1120L565 1132L530 1095M540 1085L550 1080M555 1105L565 1098",
      "M705 1095C710 1050 770 1030 800 1045Q855 1060 848 1110C835 1170 790 1190 765 1187Q705 1160 705 1095ZM780 1035L798 1018L850 1070Q850 1085 845 1085M820 1025Q840 1000 848 1015Q855 1050 850 1065M700 1115L685 1135L730 1195L755 1190M685 1145Q650 1170 675 1190Q690 1200 710 1190",
      "M880 855L955 700Q990 665 1020 665Q1060 670 1080 685M880 855Q900 895 950 890Q975 870 1000 862Q1040 855 1080 878M1010 705Q1030 690 1042 705L1040 720Q1065 725 1062 740Q1050 755 1035 750L1030 770Q1010 780 1005 765L1008 750Q980 745 985 730Q995 720 1008 722Z",
      "M995 965Q970 930 973 905Q990 880 1030 882Q1060 895 1050 910L1035 915L1058 925Q1055 950 1020 947Q990 930 995 965ZM930 965Q940 955 960 960L1035 1000Q1048 1018 1030 1020L935 978ZM945 968L1025 1010M935 980L893 1060Q900 1105 980 1118L1000 1095L1028 1030M1000 1090Q1040 1110 1050 1070Q1045 1040 1020 1045",
      "M0 1035Q50 1050 53 1100Q50 1150 20 1145L0 1115M45 1140L85 1240Q80 1270 45 1265Q25 1250 22 1155M0 1155Q20 1180 0 1220",
      "M180 1310L160 1255Q165 1245 180 1242L340 1212Q345 1200 460 1160Q490 1150 495 1165L515 1162Q530 1170 543 1310M340 1212L365 1310M180 1255L345 1212M170 1255L190 1310M345 1205L480 1165M372 1230L388 1262L398 1235L410 1255L415 1218M435 1230L490 1215Q505 1222 495 1232L445 1243Q430 1240 435 1230ZM405 1280L490 1258Q505 1262 495 1273L410 1290Q395 1288 405 1280ZM225 1305L300 1278Q315 1282 305 1290L270 1308",
      "M685 1310L682 1270Q685 1255 700 1253L725 1245L735 1230L775 1225Q785 1228 788 1238L820 1235Q830 1240 830 1250L845 1310M735 1250L765 1240Q778 1248 765 1255L745 1260Q732 1258 735 1250",
      "M900 1310Q870 1250 890 1225Q920 1200 950 1225L975 1310M895 1265L915 1255L925 1310M915 1255L950 1310M1015 1310Q990 1220 1010 1200Q1010 1140 1040 1132Q1070 1130 1080 1150M1000 1220L1050 1180L1060 1215L1080 1250M1050 1180L1055 1170L1080 1220M1010 1235L1040 1215L1060 1240Q1050 1270 1030 1300",
    ],
  },
];

function starPath([cx, cy, r, rot]: Mark, n: number, inner: number) {
  let d = "";
  for (let i = 0; i < n * 2; i++) {
    const k = i % 2 ? r * inner : r;
    const a = (Math.PI * i) / n - Math.PI / 2 + (rot * Math.PI) / 180;
    d += `${i ? "L" : "M"}${(cx + k * Math.cos(a)).toFixed(1)} ${(cy + k * Math.sin(a)).toFixed(1)}`;
  }
  return d + "Z";
}

function Wallpaper() {
  return (
    <svg viewBox="0 166 720 1350" className="absolute inset-0 h-full w-full" fill="none" stroke="#f4ede6" strokeWidth="5.800" strokeLinejoin="round" strokeLinecap="round" aria-hidden="true">
      {tiles.map((t) => (
        <g key={`${t.x}-${t.y}`} transform={`translate(${t.x} ${t.y}) scale(0.33333)`}>
          {t.dots.map(([x, y, r], i) => (
            <circle key={i} cx={x} cy={y} r={r} />
          ))}
          {t.stars.map((s, i) => (
            <path key={i} d={starPath(s, 5, 0.52)} />
          ))}
          {t.sparkles.map((s, i) => (
            <path key={i} d={starPath(s, 4, 0.3)} />
          ))}
          {t.hearts.map(([x, y, r, rot], i) => (
            <path
              key={i}
              transform={`translate(${x} ${y}) rotate(${rot}) scale(${r / 40})`}
              d="M-2 38C-25 22 -40 0 -40 -14C-38 -40 -8 -42 0 -22C10 -44 40 -36 40 -12C38 5 20 25 -2 38Z"
            />
          ))}
          {t.lines.map((d, i) => (
            <path key={i} d={d} />
          ))}
        </g>
      ))}
    </svg>
  );
}

function CoinIcon() {
  return (
    <svg className="h-6 w-6" viewBox="0 0 24 24" fill="none" stroke="#00806a" strokeLinecap="round">
      <circle cx="12" cy="12" r="11.6" fill="#e9f5f2" stroke="none" />
      <path strokeWidth="1.5" d="M15.2 9.4C15 7.7 13.7 7 12 7c-1.900 0-3.200.9-3.200 2.400 0 3.300 6.500 1.900 6.500 5.200 0 1.500-1.400 2.500-3.300 2.500-1.800 0-3.200-.8-3.300-2.500" />
      <path strokeWidth="1.200" d="M6.800 6C9 3.800 14 3.400 17.200 6M6.800 18c2.200 2.200 7.200 2.600 10.400 0" />
    </svg>
  );
}

function TikTokIcon() {
  const note = "M12.500 1h3.700c.2 2.700 2 4.700 4.700 4.900v3.800c-1.800 0-3.300-.5-4.600-1.400v7.900c0 4-3.100 6.800-6.700 6.800-3.800 0-6.800-3-6.800-6.700 0-4 3.500-7.100 7.600-6.600v3.900c-2-.6-3.800.8-3.800 2.700 0 1.600 1.300 2.900 2.900 2.900 1.700 0 3-1.200 3-3.100z";
  return (
    <svg className="-ml-px mr-px h-[26px] w-6" viewBox="0 0 24 26">
      <path d={note} fill="#29e5e0" />
      <path d={note} fill="#f0365c" transform="translate(1.800 1.800)" />
      <path d={note} fill="#ffffff" stroke="#ffffff" strokeWidth=".5" transform="translate(.9 .9)" />
    </svg>
  );
}

function AlarmIcon() {
  return (
    <svg className="h-[22px] w-[22px]" viewBox="0 0 22 22" fill="none" stroke="#e9f5f2" strokeLinecap="round">
      <circle cx="11" cy="11.500" r="8.600" fill="#e9f5f2" stroke="none" />
      <path strokeWidth="2" d="M2 5l3.200-3M20 5l-3.200-3M5 18.500l-1.500 1.700M17 18.500l1.500 1.700" />
      <path stroke="#00806a" strokeWidth="1.700" d="M11 7v5h4" />
    </svg>
  );
}

function SignalIcon() {
  return (
    <svg className="h-[21px] w-[19px]" viewBox="0 0 19 21" fill="#e9f5f2">
      <rect x="0" y="16" width="2.600" height="4.500" rx=".8" />
      <rect x="5.300" y="11" width="2.600" height="9.500" rx=".8" />
      <rect x="10.600" y="6" width="2.600" height="14.500" rx=".8" opacity=".38" />
      <rect x="15.900" y="1" width="2.600" height="19.500" rx=".8" opacity=".38" />
    </svg>
  );
}

function StatusBar() {
  return (
    <div className="flex h-[66px] items-center pt-[22px] pl-[106px] pr-[40px]">
      <span className="w-[75px] shrink-0 text-[26.5px] leading-[30px] text-[#e9f5f2]">15:08</span>
      <div className="flex items-center gap-2">
        <CoinIcon />
        <TikTokIcon />
        <CoinIcon />
      </div>
      <span className="ml-4 h-2 w-2 rounded-full bg-[#e9f5f2]" />
      <div className="ml-auto flex items-center">
        <AlarmIcon />
        <div className="ml-[12px] flex w-4 flex-col items-center">
          <span className="h-[11px] text-[13px] leading-[11px] font-bold tracking-[-0.300px] text-[#e9f5f2]">4G</span>
          <svg className="h-[10px] w-4" viewBox="0 0 16 10" fill="none" stroke="#e9f5f2" strokeWidth="1.700">
            <path d="M4.500 0v8.500M1 5.200l3.500 3.500L8 5.200M11.500 10V1.500M8 4.800l3.500-3.500L15 4.800" />
          </svg>
        </div>
        <div className="ml-[10px] mr-px flex gap-[9px]">
          <SignalIcon />
          <SignalIcon />
        </div>
        <svg className="ml-[9px] h-[23px] w-[14px]" viewBox="0 0 14 23">
          <path fill="#57a999" d="M4 2q0-2 2-2h2q2 0 2 2 4 0 4 3v8H0V5q0-3 4-3z" />
          <path fill="#e9f5f2" d="M0 12.500h14v7.500q0 2.500-2.500 2.500h-9Q0 22.500 0 20z" />
        </svg>
      </div>
    </div>
  );
}

function Toolbar() {
  return (
    <div className="flex h-[100px] pl-[15px] pr-[35px]">
      <svg className="mt-9 h-7 w-7 shrink-0" viewBox="0 0 28 28" fill="none" stroke="#fff" strokeWidth="3.300">
        <path d="M28 14H2.500M15 1.500L2.500 14 15 26.500" />
      </svg>
      <div className="mt-5 ml-[7px] flex h-[61px] w-[61px] shrink-0 items-center justify-center rounded-full bg-white">
        <svg className="mb-px h-7 w-7" viewBox="0 0 28 28" fill="none" strokeLinecap="round">
          <defs>
            <linearGradient id="brand" gradientUnits="userSpaceOnUse" x1="2" y1="0" x2="25" y2="0">
              <stop offset="0" stopColor="#4a1a9c" />
              <stop offset=".45" stopColor="#b3248c" />
              <stop offset=".8" stopColor="#e2512f" />
              <stop offset="1" stopColor="#f0743d" />
            </linearGradient>
          </defs>
          <path stroke="url(#brand)" strokeWidth="2.600" strokeLinejoin="round" d="M4.300 16.800L4.600 6.500Q6 2.800 8 6.200L12.400 16 17 7.200" />
          <path stroke="url(#brand)" strokeWidth="1" d="M5.500 12L9 8.500" />
          <path stroke="url(#brand)" strokeWidth="1.400" d="M13.500 8.500Q18 3.200 25 3.200M14.500 7.500Q18.500 5 20.500 7.500Q25.500 16 22.300 24" />
          <path stroke="#5b3aa8" strokeWidth="1.300" strokeDasharray="1.500 .5" strokeLinecap="butt" d="M3 19.300h11" />
          <path stroke="#f3a27c" strokeWidth="1.300" strokeDasharray="1.500 .5" strokeLinecap="butt" d="M14 19.300h7" />
        </svg>
      </div>
      <div className="mt-4 ml-[15px] flex flex-col whitespace-nowrap">
        <span className="text-[31px] leading-[37px] tracking-[0.500px] text-white">Manage Moi</span>
        <span className="ml-px text-[23px] leading-[37px] tracking-[0.480px] text-[#e0f2ee]">1,4 K followers</span>
      </div>
      <svg className="mt-8 ml-auto h-[38px] w-[34px] shrink-0" viewBox="0 0 34 38" fill="#fff">
        <path d="M14.300 4.800V3.300a2.700 2.700 0 0 1 5.400 0v1.500c5 1.200 8.800 5.500 8.800 11v9L11.500 7.600c1-1.300 1.600-2.300 2.800-2.800zM7.500 14.500L22 29.700H5q-1.500-.2-1.200-2l3.700-3.700zM13.800 32h6.600q-.8 3.200-3.300 3.200T13.800 32z" />
        <path stroke="#fff" strokeWidth="2.900" strokeLinecap="round" d="M2 6.500l29 29" />
      </svg>
      <svg className="mt-9 ml-[52px] h-[30px] w-2 shrink-0" viewBox="0 0 8 30" fill="#fff">
        <circle cx="4" cy="4.500" r="3.700" />
        <circle cx="4" cy="15" r="3.700" />
        <circle cx="4" cy="25.500" r="3.700" />
      </svg>
    </div>
  );
}

function Chip({ className, children }: { className: string; children: React.ReactNode }) {
  return (
    <div className={`rounded-[13px] bg-[#f7f7f5] text-center whitespace-nowrap text-[#54656f] shadow-[0_1px_2px_rgba(90,70,50,0.25)] ${className}`}>
      {children}
    </div>
  );
}

function Reactions() {
  return (
    <div className="relative -mt-[5px] ml-[43.5px] flex h-[48px] w-[225px] items-center self-start rounded-full bg-white pt-px pl-[12px] shadow-[0_0_0_1px_#ebebea,0_1px_2px_rgba(90,70,50,0.3)]">
      <svg className="mb-px h-[33px] w-[30px]" viewBox="0 0 30 33">
        <defs>
          <linearGradient id="thumb" x1="0" y1="0" x2="1" y2="1">
            <stop offset="0" stopColor="#ffd23e" />
            <stop offset=".6" stopColor="#fbbb2c" />
            <stop offset="1" stopColor="#d98f17" />
          </linearGradient>
          <radialGradient id="yellow" cx=".5" cy=".35" r=".65">
            <stop offset="0" stopColor="#ffe95c" />
            <stop offset=".6" stopColor="#fcc938" />
            <stop offset="1" stopColor="#ec9a2a" />
          </radialGradient>
          <radialGradient id="red" cx=".5" cy=".3" r=".7">
            <stop offset="0" stopColor="#f4664a" />
            <stop offset=".6" stopColor="#e23a24" />
            <stop offset="1" stopColor="#bd2414" />
          </radialGradient>
          <linearGradient id="love" x1="0" y1="0" x2="0" y2="1">
            <stop offset="0" stopColor="#fb4a50" />
            <stop offset="1" stopColor="#e0162b" />
          </linearGradient>
        </defs>
        <path fill="url(#thumb)" d="M1.500 15h6.500c4-3 5.500-6.500 6.300-11.500Q15 .5 17.500 1c3.200 1 2.800 6.500 1 11.500h8q3 .5 2.800 2.800-.2 1.500-1.300 2.200 1.700.8 1.500 2.500-.3 1.800-1.700 2.300 1.200.8.800 2.500-.5 1.600-1.800 1.900 1 1 .3 2.600-.9 2.200-4 2.400H13c-3-.3-4-2-6.500-2l-5 .8Q0 22 1.500 15z" />
        <path fill="none" stroke="#c67d12" strokeWidth="1" strokeLinecap="round" d="M28 17.500q-4.500.3-8.500-.3M27.800 22.300q-4 .3-8 0M26.800 26.800q-3.500.4-6.500 0M19 13q-2.500 2-2 4.500t2 4q-.5 3 1 5.300M8 15q2-.5 3 0" />
      </svg>
      <svg className="ml-[11px] h-[31px] w-[33px]" viewBox="0 0 33 31">
        <path fill="url(#love)" stroke="#cf1b2c" strokeWidth=".6" d="M16.500 30.500C7 23.500.5 17 .5 9.500.5 4 4.200.8 8.600.8c3.500 0 6.400 1.700 7.900 4.700C18 2.500 20.900.8 24.400.8c4.400 0 8.100 3.200 8.100 8.700 0 7.500-6.500 14-16 21z" />
        <path fill="none" stroke="#ff9a98" strokeWidth="1.500" strokeLinecap="round" opacity=".7" d="M3.500 7Q5 3 9 3M20 4.500Q22.500 2.500 26 3.200" />
      </svg>
      <svg className="ml-[10px] h-[34px] w-[34px]" viewBox="0 0 34 34">
        <circle cx="17" cy="17" r="16.300" fill="url(#yellow)" />
        <ellipse cx="11.500" cy="13" rx="2" ry="2.400" fill="#6b4a12" />
        <ellipse cx="22.700" cy="13" rx="2" ry="2.400" fill="#6b4a12" />
        <circle cx="11.500" cy="12.500" r=".8" fill="#d9c29a" />
        <circle cx="22.700" cy="12.500" r=".8" fill="#d9c29a" />
        <path fill="none" stroke="#dba52a" strokeWidth=".9" strokeLinecap="round" d="M8.500 8.500q1.500-2 4-2M25.500 8.500q-1.500-2-4-2" />
        <ellipse cx="17" cy="24" rx="4.500" ry="4.700" fill="#5a3a0c" />
      </svg>
      <svg className="ml-[9px] h-[34px] w-[34px]" viewBox="0 0 34 34">
        <circle cx="17" cy="17" r="16.300" fill="url(#red)" />
        <g fill="none" stroke="#5f1410" strokeWidth="1.300" strokeLinecap="round">
          <path d="M5.500 14.500q4-.2 8 3M28.500 14.500q-4-.2-8 3" />
          <path strokeWidth="2" d="M12 26.500q5-4.500 10 0" />
        </g>
        <circle cx="11.800" cy="18" r="2" fill="#6b1d16" />
        <circle cx="22.200" cy="18" r="2" fill="#6b1d16" />
        <circle cx="11.800" cy="17.700" r=".9" fill="#d9968a" />
        <circle cx="22.200" cy="17.700" r=".9" fill="#d9968a" />
      </svg>
      <span className="ml-[11px] pt-0.5 text-[24.5px] leading-[30px] text-[#667781]">56</span>
    </div>
  );
}

function Chat() {
  return (
    <main className="relative h-[1350px] overflow-hidden bg-[#eee6dd]">
      <Wallpaper />
      <div className="relative flex flex-col items-center pt-2">
        <Chip className="mr-px h-[50px] w-[244px] text-[24.7px] leading-[53px] font-medium">30 septembre 2023</Chip>
        <Chip className="mt-4 mr-px h-[109px] w-[658px] pt-[13px] text-[24.7px] leading-[29px]">
          <div className="flex items-center justify-center">
            <svg className="mr-[5px] h-[18px] w-[26px]" viewBox="0 0 26 18" fill="none" stroke="#54656f" strokeWidth="2.300" strokeLinecap="round">
              <circle cx="13" cy="9" r="2" fill="#54656f" stroke="none" />
              <path d="M4.300 1.500q-5 7.500 0 15M21.700 1.500q5 7.500 0 15M8.500 5q-2.500 4 0 8M17.500 5q2.500 4 0 8" />
            </svg>
            <span>Pour cette chaîne, la confidentialité de votre profil et</span>
          </div>
          <div>de votre numéro de téléphone est renforcée. Appuyez</div>
          <div>pour en savoir plus.</div>
        </Chip>
        <Chip className="mt-5 mr-px h-[50px] w-[423px] pl-0.5 text-[24.7px] leading-[53px]">La chaîne "Manage Moi" a été créée</Chip>
        <Chip className="mt-[21px] mr-px h-[50px] w-[237px] text-[24.7px] leading-[53px] font-medium">10 décembre 2023</Chip>
        <section className="mt-[17px] flex h-[98px] w-[665px] justify-between rounded-[20px] bg-white pt-[11px] pr-[16px] pl-[18px] shadow-[0_1px_2px_rgba(90,70,50,0.3)]">
          <p className="text-[30px] leading-[37px] tracking-[-0.140px] whitespace-nowrap text-[#111b21]">
            Coucou les gars
            <br />
            Missions en ligne !
          </p>
          <time className="self-end pb-1 text-[23px] leading-[30px] text-[#667781]">16:49</time>
        </section>
        <Reactions />
      </div>
    </main>
  );
}

function NavBar() {
  return (
    <nav className="flex h-[84px] items-center bg-[#f7f9fb] pr-[148px] pl-[147px]">
      <svg className="mb-[3px] h-7 w-[27px]" viewBox="0 0 27 28" stroke="#8e9193" strokeWidth="3.700" strokeLinecap="round">
        <path d="M2.700 2.500v23M13.400 2.500v23M24 2.500v23" />
      </svg>
      <svg className="mb-[3px] ml-[172.500px] h-[30px] w-[30px]" viewBox="0 0 30 30" fill="none" stroke="#8e9193" strokeWidth="3">
        <path d="M15 2.200c9.800 0 12.800 3 12.800 12.800S24.800 27.800 15 27.800 2.200 24.800 2.200 15 5.200 2.200 15 2.200z" />
      </svg>
      <svg className="mb-[3px] ml-auto h-7 w-[17px]" viewBox="0 0 17 28" fill="none" stroke="#8e9193" strokeWidth="3.200" strokeLinecap="round">
        <path d="M14.500 2.500L3 14l11.500 11.500" />
      </svg>
    </nav>
  );
}

export default function App() {
  return (
    <div className="h-[1600px] w-[720px] overflow-hidden bg-[#eee6dd] font-[Roboto,sans-serif]">
      <header className="h-[166px] bg-[#008069]">
        <StatusBar />
        <Toolbar />
      </header>
      <Chat />
      <NavBar />
    </div>
  );
}
